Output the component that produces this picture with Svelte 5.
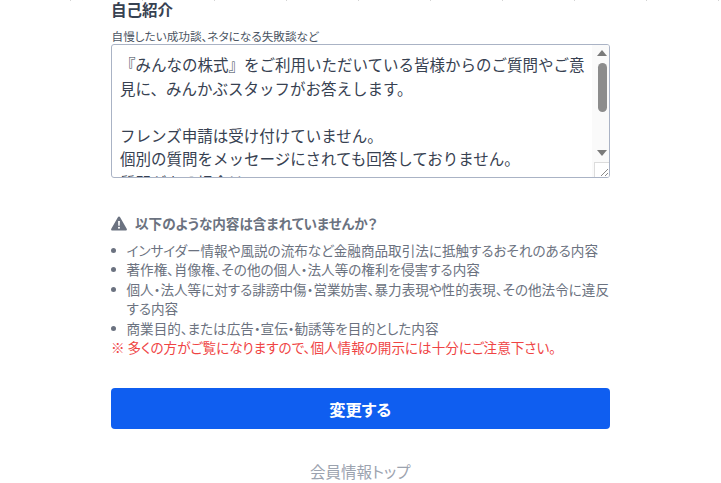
<script lang="ts">
  const notices = [
    'インサイダー情報や風説の流布など金融商品取引法に抵触するおそれのある内容',
    '著作権、肖像権、その他の個人・法人等の権利を侵害する内容',
    '個人・法人等に対する誹謗中傷・営業妨害、暴力表現や性的表現、その他法令に違反する内容',
    '商業目的、または広告・宣伝・勧誘等を目的とした内容'
  ];
</script>

<main class="form">
  <h2 class="title">自己紹介</h2>
  <p class="hint">自慢したい成功談、ネタになる失敗談など</p>

  <div class="textbox">
    <div class="textbox__text">
      『みんなの株式』をご利用いただいている皆様からのご質問やご意見に、みんかぶスタッフがお答えします。<br /><br />
      フレンズ申請は受け付けていません。<br />
      個別の質問をメッセージにされても回答しておりません。<br />
      質問がある場合は
    </div>
    <div class="scrollbar" aria-hidden="true">
      <span class="arrow arrow--up"></span>
      <div class="track"><span class="thumb"></span></div>
      <span class="arrow arrow--down"></span>
      <span class="resizer">
        <svg width="12" height="12" viewBox="0 0 12 12" fill="none" stroke="#8a8a8a" stroke-width="1">
          <path d="M11 4 4 11M11 8 8 11" />
        </svg>
      </span>
    </div>
  </div>

  <section class="notice">
    <h3 class="notice__head">
      <svg width="16" height="15" viewBox="0 0 16 15" aria-hidden="true">
        <path fill="#6b7280" fill-rule="evenodd" d="M8 .5c.5 0 .9.3 1.1.7l6.600 11.600c.5.8-.1 1.700-1 1.700H1.300c-.9 0-1.500-.9-1-1.700L6.900 1.200C7.100.8 7.500.5 8 .5ZM7.100 5l.2 4.800h1.400L8.900 5H7.100Zm.9 5.700a1.050 1.050 0 1 0 0 2.100 1.050 1.050 0 0 0 0-2.100Z" />
      </svg>
      以下のような内容は含まれていませんか？
    </h3>
    <ul class="notice__list">
      {#each notices as item}
        <li>{item}</li>
      {/each}
    </ul>
    <p class="caution">※ 多くの方がご覧になりますので、個人情報の開示には十分にご注意下さい。</p>
  </section>

  <button class="submit" type="button">変更する</button>
  <a class="back" href="#top">会員情報トップ</a>
</main>

<style>
  :global(body) {
    background: #fff repeating-linear-gradient(90deg, transparent 0 70px, #d4d4d4 70px 71px, transparent 71px 72px) no-repeat 0 0 / 100% 1px;
  }

  .form {
    width: 499.5px;
    margin-left: 110.5px;
    font-family: "Noto Sans CJK JP", "Noto Sans", sans-serif;
    font-feature-settings: "palt";
    height: 483px;
    overflow: hidden;
    display: flex;
    flex-direction: column;
  }

  .title {
    margin: -1px 0 0;
    padding-left: 0.5px;
    font-size: 15.5px;
    line-height: 20px;
    font-weight: 700;
    color: #374151;
  }

  .hint {
    margin: 9px 0 0;
    padding-left: 1px;
    font-size: 11.64px;
    line-height: 16px;
    color: #4b5563;
  }

  .textbox {
    flex: none;
    display: flex;
    height: 134px;
    box-sizing: border-box;
    border: 1px solid #aab3c5;
    border-radius: 3px;
    overflow: hidden;
  }

  .textbox__text {
    flex: 1;
    padding: 8px 0 0 8.5px;
    font-size: 15.5px;
    line-height: 23.5px;
    font-feature-settings: normal;
    color: #374151;
    overflow: hidden;
  }

  .scrollbar {
    width: 17px;
    box-sizing: border-box;
    padding-left: 3px;
    flex: none;
    display: flex;
    flex-direction: column;
    align-items: center;
    background: #fafafa;
  }

  .arrow {
    flex: none;
    width: 0;
    height: 0;
    border-left: 5px solid transparent;
    border-right: 5px solid transparent;
  }

  .arrow--up {
    margin-top: 5px;
    border-bottom: 6px solid #7a7a7a;
  }

  .arrow--down {
    margin-bottom: 6px;
    border-top: 6px solid #7a7a7a;
  }

  .track {
    flex: 1;
    padding-top: 7px;
  }

  .thumb {
    display: block;
    width: 9px;
    height: 49px;
    border-radius: 5px;
    background: #8c8c8c;
  }

  .resizer {
    width: 14px;
    height: 14px;
    align-self: flex-end;
    display: flex;
    justify-content: flex-end;
    align-items: flex-end;
    background: #fff;
    border: 1px solid #dcdcdc;
    border-width: 1px 0 0 1px;
  }

  .notice {
    flex: none;
    margin-top: 35px;
  }

  .notice__head {
    display: flex;
    align-items: center;
    gap: 8px;
    margin: 0;
    padding-left: 0.5px;
    font-size: 13.58px;
    line-height: 20px;
    font-weight: 700;
    color: #6b7280;
  }

  .notice__list {
    margin: 8px 0 0;
    padding: 0 0 0 16px;
    list-style: none;
    font-size: 13.58px;
    line-height: 19.4px;
    color: #6b7280;
  }

  .notice__list li::before {
    content: "";
    display: inline-block;
    width: 5px;
    height: 5px;
    margin-left: -16px;
    margin-right: 11px;
    border-radius: 50%;
    background: #6b7280;
    vertical-align: 3px;
  }

  .caution {
    margin: 0;
    padding-left: 0.5px;
    font-size: 13.58px;
    line-height: 19.4px;
    color: #ef4444;
  }

  .submit {
    flex: none;
    margin-top: 31px;
    height: 41px;
    border: none;
    border-radius: 4px;
    background: #0f5ef0;
    color: #fff;
    font-family: inherit;
    font-feature-settings: inherit;
    font-size: 16.3px;
    font-weight: 700;
  }

  .back {
    flex: none;
    margin-top: 31px;
    text-align: center;
    font-size: 15.52px;
    line-height: 22px;
    color: #9ca3af;
    text-decoration: none;
  }
</style>
